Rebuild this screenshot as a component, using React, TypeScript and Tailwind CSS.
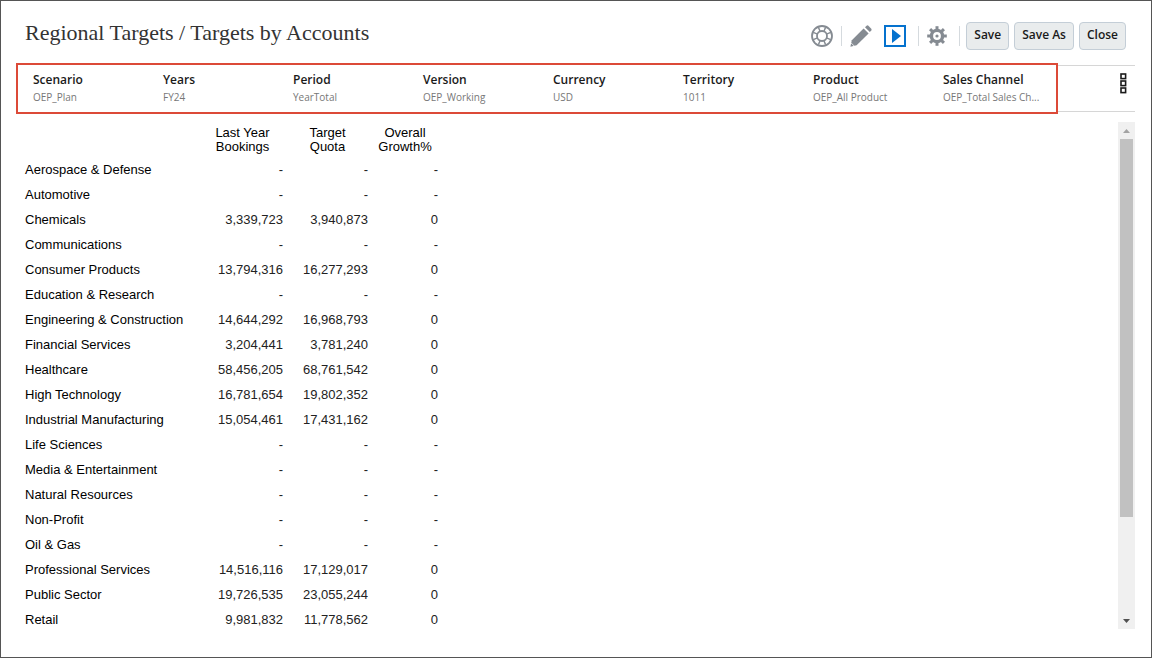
const dimensions = [
    { label: "Scenario", value: "OEP_Plan" },
    { label: "Years", value: "FY24" },
    { label: "Period", value: "YearTotal" },
    { label: "Version", value: "OEP_Working" },
    { label: "Currency", value: "USD" },
    { label: "Territory", value: "1011" },
    { label: "Product", value: "OEP_All Product" },
    { label: "Sales Channel", value: "OEP_Total Sales Ch..." },
];

const rows = [
    ["Aerospace & Defense", "-", "-", "-"],
    ["Automotive", "-", "-", "-"],
    ["Chemicals", "3,339,723", "3,940,873", "0"],
    ["Communications", "-", "-", "-"],
    ["Consumer Products", "13,794,316", "16,277,293", "0"],
    ["Education & Research", "-", "-", "-"],
    ["Engineering & Construction", "14,644,292", "16,968,793", "0"],
    ["Financial Services", "3,204,441", "3,781,240", "0"],
    ["Healthcare", "58,456,205", "68,761,542", "0"],
    ["High Technology", "16,781,654", "19,802,352", "0"],
    ["Industrial Manufacturing", "15,054,461", "17,431,162", "0"],
    ["Life Sciences", "-", "-", "-"],
    ["Media & Entertainment", "-", "-", "-"],
    ["Natural Resources", "-", "-", "-"],
    ["Non-Profit", "-", "-", "-"],
    ["Oil & Gas", "-", "-", "-"],
    ["Professional Services", "14,516,116", "17,129,017", "0"],
    ["Public Sector", "19,726,535", "23,055,244", "0"],
    ["Retail", "9,981,832", "11,778,562", "0"],
];

const spokes = [0, 45, 90, 135, 180, 225, 270, 315];

const HelpIcon = () => (
    <svg width="22" height="22" viewBox="0 0 22 22" fill="none" stroke="#858b92">
        <circle cx="11" cy="11" r="10" strokeWidth="1.8" />
        <circle cx="11" cy="11" r="5" strokeWidth="1.8" />
        {spokes.map((angle) => (
            <path key={angle} d="M11 6.2V1.5" strokeWidth="1.5" transform={`rotate(${angle + 22.5} 11 11)`} />
        ))}
    </svg>
);

const PencilIcon = () => (
    <svg width="22" height="22" viewBox="0 0 22 22" fill="#858b92">
        <path d="M13.6 3.4 18.6 8.4 6.6 20.2 0.4 21.8 1.8 15.2Z" />
        <path d="M15 2.2 16.6 0.7Q17.5 0 18.4 0.8L21.3 3.7Q22 4.6 21.3 5.5L19.8 7Z" />
        <path d="M1 17.8 4.4 21.2" stroke="#fff" strokeWidth="0.8" />
    </svg>
);

const PlayIcon = () => (
    <svg width="22" height="22" viewBox="0 0 22 22">
        <rect x="1" y="1" width="20" height="20" fill="#fff" stroke="#0572ce" strokeWidth="2" />
        <path d="M8 4 17 11 8 18Z" fill="#0572ce" />
    </svg>
);

const GearIcon = () => (
    <svg width="20" height="20" viewBox="0 0 20 20" fill="none" stroke="#858b92">
        <circle cx="10" cy="10" r="5.6" strokeWidth="3.4" />
        {spokes.map((angle) => (
            <path key={angle} d="M10 4V0.2" strokeWidth="3" transform={`rotate(${angle} 10 10)`} />
        ))}
        <circle cx="10" cy="10" r="1.6" fill="#858b92" stroke="none" />
    </svg>
);

const DotsIcon = () => (
    <svg width="7" height="21" viewBox="0 0 7 21" fill="none" stroke="#1a1a1a" strokeWidth="1.6">
        <rect x="1" y="1" width="4.6" height="4.6" />
        <rect x="1" y="8" width="4.6" height="4.6" />
        <rect x="1" y="15" width="4.6" height="4.6" />
    </svg>
);

const Divider = () => <div className="h-5 w-px bg-[#d5dade]"></div>;

const buttonStyle =
    "h-7 rounded-sm border border-[#c4ced7] bg-[#e9eced] px-[7px] pb-0.5 text-xs font-semibold text-[#1a1a1a]";

const Header = () => (
    <header className="flex h-[62px] items-start justify-between pr-[25px] pl-6">
        <h1 className="pt-[18px] font-['Liberation_Serif',serif] text-[22px] leading-7 text-[#333]">
            Regional Targets / Targets by Accounts
        </h1>
        <div className="flex items-center gap-[5px] pt-[21px]">
            <div className="mr-px flex items-center gap-2">
                <button aria-label="Help"><HelpIcon /></button>
                <Divider />
                <button aria-label="Edit"><PencilIcon /></button>
                <button aria-label="Run" className="mx-1"><PlayIcon /></button>
                <Divider />
                <button aria-label="Settings" className="mr-1"><GearIcon /></button>
                <Divider />
            </div>
            <button className={buttonStyle}>Save</button>
            <button className={buttonStyle}>Save As</button>
            <button className={buttonStyle}>Close</button>
        </div>
    </header>
);

const PointOfView = () => (
    <section className="flex pr-4 pl-[15px]">
        <dl className="flex h-[51px] flex-1 border-2 border-[#dc4a38] pt-1.5 pl-[15px]">
            {dimensions.map((item) => (
                <div key={item.label} className="w-[130px] shrink-0 whitespace-nowrap last:w-auto">
                    <dt className="text-xs leading-[18px] font-semibold text-[#1a1a1a]">{item.label}</dt>
                    <dd className="text-[10px] leading-4 text-[#777]">{item.value}</dd>
                </div>
            ))}
        </dl>
        <div className="my-0.5 flex w-[77px] items-start justify-end border-y border-[#d6d6d6] pt-[7px] pr-2">
            <button aria-label="Dimension options"><DotsIcon /></button>
        </div>
    </section>
);

const Grid = () => (
    <table className="table-fixed border-collapse font-['Liberation_Sans',Arial,sans-serif] text-[13px] text-black">
        <colgroup>
            <col className="w-[175px]" />
            <col className="w-[85px]" />
            <col className="w-[85px]" />
            <col className="w-[70px]" />
        </colgroup>
        <thead>
            <tr className="h-[35px] leading-[14px]">
                <td></td>
                <th scope="col" className="font-normal">Last Year<br />Bookings</th>
                <th scope="col" className="font-normal">Target<br />Quota</th>
                <th scope="col" className="font-normal">Overall<br />Growth%</th>
            </tr>
        </thead>
        <tbody>
            {rows.map(([name, ...values]) => (
                <tr key={name} className="h-[25px] leading-4">
                    <th scope="row" className="text-left font-normal whitespace-nowrap">{name}</th>
                    {values.map((value, i) => (
                        <td key={i} className="pr-0.5 text-right text-[#222]">{value}</td>
                    ))}
                </tr>
            ))}
        </tbody>
    </table>
);

const ScrollBar = () => (
    <div className="mb-[3px] flex w-[17px] flex-col bg-[#f0f0f0]">
        <button aria-label="Scroll up" className="flex h-[17px] items-center justify-center">
            <svg width="7" height="4" viewBox="0 0 7 4" fill="#a3a3a3"><path d="M0 4 3.5 0 7 4Z" /></svg>
        </button>
        <div className="flex-1 px-0.5">
            <div className="h-4/5 bg-[#c1c1c1]"></div>
        </div>
        <button aria-label="Scroll down" className="flex h-[17px] items-center justify-center">
            <svg width="7" height="4" viewBox="0 0 7 4" fill="#505050"><path d="M0 0 3.5 4 7 0Z" /></svg>
        </button>
    </div>
);

const App: React.FC = () => {
    return (
        <div className="min-h-screen border border-[#555] bg-white pb-6 font-['Open_Sans','Noto_Sans',sans-serif]">
            <Header />
            <PointOfView />
            <main className="flex justify-between pt-2 pr-4 pl-6">
                <Grid />
                <ScrollBar />
            </main>
        </div>
    );
};

export default App;
